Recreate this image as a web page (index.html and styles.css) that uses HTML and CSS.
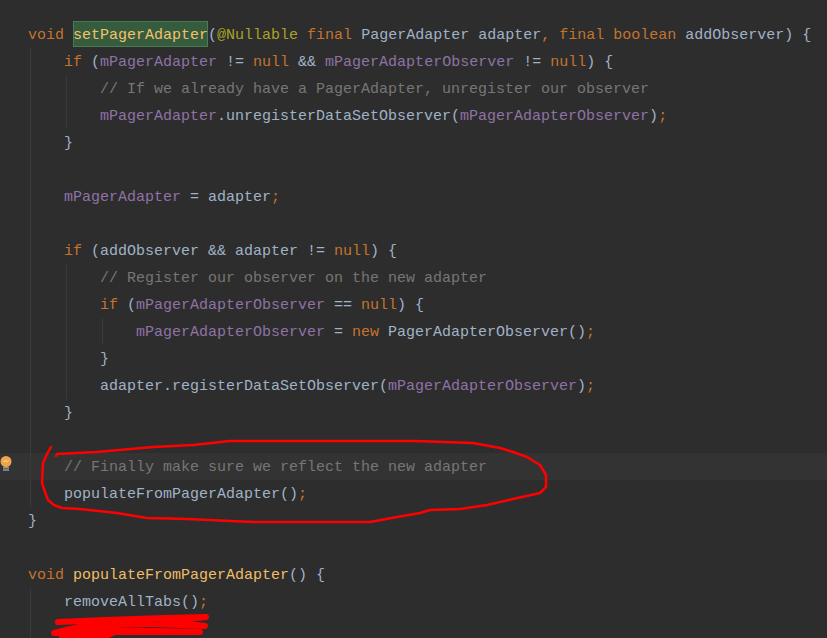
FILE: index.html
```html
<!DOCTYPE html>
<html lang="en">
<head>
<meta charset="utf-8">
<title>setPagerAdapter</title>
<link rel="stylesheet" href="styles.css">
</head>
<body>
<main class="editor">
<div class="line"><span class="k">void</span> <span class="usage">setPagerAdapter</span>(<span class="a">@Nullable</span> <span class="k">final</span> PagerAdapter adapter<span class="k">,</span> <span class="k">final boolean</span> addObserver) {</div>
<div class="line"><i class="guide"></i><span class="k">if</span> (<span class="f">mPagerAdapter</span> != <span class="k">null</span> &amp;&amp; <span class="f">mPagerAdapterObserver</span> != <span class="k">null</span>) {</div>
<div class="line"><i class="guide"></i><i class="guide"></i><span class="c">// If we already have a PagerAdapter, unregister our observer</span></div>
<div class="line"><i class="guide"></i><i class="guide"></i><span class="f">mPagerAdapter</span>.unregisterDataSetObserver(<span class="f">mPagerAdapterObserver</span>)<span class="k">;</span></div>
<div class="line"><i class="guide"></i>}</div>
<div class="line"><i class="guide"></i></div>
<div class="line"><i class="guide"></i><span class="f">mPagerAdapter</span> = adapter<span class="k">;</span></div>
<div class="line"><i class="guide"></i></div>
<div class="line"><i class="guide"></i><span class="k">if</span> (addObserver &amp;&amp; adapter != <span class="k">null</span>) {</div>
<div class="line"><i class="guide"></i><i class="guide"></i><span class="c">// Register our observer on the new adapter</span></div>
<div class="line"><i class="guide"></i><i class="guide"></i><span class="k">if</span> (<span class="f">mPagerAdapterObserver</span> == <span class="k">null</span>) {</div>
<div class="line"><i class="guide"></i><i class="guide"></i><i class="guide"></i><span class="f">mPagerAdapterObserver</span> = <span class="k">new</span> PagerAdapterObserver()<span class="k">;</span></div>
<div class="line"><i class="guide"></i><i class="guide"></i>}</div>
<div class="line"><i class="guide"></i><i class="guide"></i>adapter.registerDataSetObserver(<span class="f">mPagerAdapterObserver</span>)<span class="k">;</span></div>
<div class="line"><i class="guide"></i>}</div>
<div class="line"><i class="guide"></i></div>
<div class="line current"><i class="guide"></i><span class="c">// Finally make sure we reflect the new adapter</span><svg class="bulb" viewBox="0 0 12 16" aria-hidden="true"><circle cx="6" cy="5.500" r="5.500" fill="#eea54a"/><path d="M3.500 4.500l1.200 1.500L6 4.500l1.300 1.500 1.200-1.500" fill="none" stroke="#ffe0a8"/><rect x="3" y="11" width="6" height="1.500" fill="#9a9a9a"/><rect x="3" y="13" width="6" height="2" fill="#808080"/></svg></div>
<div class="line"><i class="guide"></i>populateFromPagerAdapter()<span class="k">;</span></div>
<div class="line">}</div>
<div class="line"></div>
<div class="line"><span class="k">void</span> <span class="m">populateFromPagerAdapter</span>() {</div>
<div class="line"><i class="guide"></i>removeAllTabs()<span class="k">;</span></div>
<div class="line"><i class="guide"></i></div>
</main>
<svg class="ink" viewBox="0 0 827 638" aria-hidden="true">
<polyline class="pen" points="51,447 47,454 43,463 42,483 45,492 48,500 54,505 62,508 80,509 117,513 147,518 187,519 253,522 300,522 370,522 397,517 420,513 430,510 460,509 487,505 513,499 540,493 546,487 546,475 540,465 527,457 513,452 500,448 473,443 415,441 300,441 230,441 193,445 153,447 97,452 57,454 56,456"/>
<polyline class="marker" points="58,622 105,620 165,618 206,617 165,621 205,626 150,624 100,624 70,629 54,633 100,630 115,630 200,632 115,632 108,635 62,636"/>
</svg>
</body>
</html>
```
FILE: styles.css
```css
html, body {
  margin: 0;
  height: 100%;
  overflow: hidden;
  background: #2d2d2d;
}
.editor {
  padding-top: 21px;
  font: 15px/29px "Liberation Mono", monospace;
  color: #a0b2c6;
}
.line {
  position: relative;
  height: 27px;
  padding-left: 28px;
  white-space: pre;
}
.guide {
  display: inline-block;
  vertical-align: top;
  box-sizing: border-box;
  width: 34px;
  height: 27px;
  margin-left: 2px;
  border-left: 1px solid #3a3a3a;
}
.current { background: #333333; }
.k { color: #c4742f; }
.f { color: #8f72a6; }
.c { color: #767676; }
.a { color: #a8a326; }
.m { color: #f0bc68; }
.usage {
  display: inline-block;
  height: 26px;
  color: #f5c06a;
  background: #365c3e;
  box-shadow: inset 0 0 0 1px #4a7a52;
}
.bulb {
  position: absolute;
  left: 0;
  top: 3px;
  width: 12px;
  height: 16px;
}
.ink {
  position: absolute;
  inset: 0;
  width: 827px;
  height: 638px;
  pointer-events: none;
}
.pen, .marker {
  fill: none;
  stroke: #ff0000;
  stroke-linejoin: round;
  stroke-linecap: round;
}
.pen { stroke-width: 2.500; }
.marker { stroke-width: 6; }
```
